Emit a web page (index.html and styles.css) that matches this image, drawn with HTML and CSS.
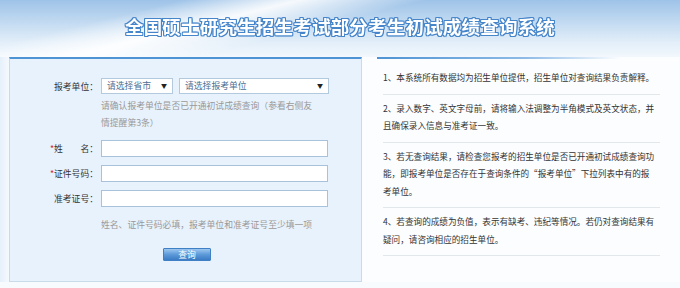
FILE: index.html
```html
<!DOCTYPE html>
<html lang="zh-CN">
<head>
    <meta charset="utf-8">
    <title>全国硕士研究生招生考试部分考生初试成绩查询系统</title>
    <link rel="stylesheet" href="styles.css">
</head>
<body>
    <div class="header">
        <h1 class="title">全国硕士研究生招生考试部分考生初试成绩查询系统</h1>
    </div>
    <div class="main">
        <div class="query-panel">
            <div class="form-row">
                <label class="form-label">报考单位：</label>
                <div class="form-field">
                    <span class="select-box province">请选择省市</span>
                    <span class="select-box school">请选择报考单位</span>
                </div>
            </div>
            <div class="hint">请确认报考单位是否已开通初试成绩查询（参看右侧友<br>情提醒第3条）</div>
            <div class="form-row input-row">
                <label class="form-label"><span class="required">*</span>姓　　名：</label>
                <div class="form-field"><input type="text" class="text-input"></div>
            </div>
            <div class="form-row input-row">
                <label class="form-label"><span class="required">*</span>证件号码：</label>
                <div class="form-field"><input type="text" class="text-input"></div>
            </div>
            <div class="form-row input-row">
                <label class="form-label">准考证号：</label>
                <div class="form-field"><input type="text" class="text-input"></div>
            </div>
            <div class="hint">姓名、证件号码必填，报考单位和准考证号至少填一项</div>
            <div class="button-row">
                <button class="query-button">查询</button>
            </div>
        </div>
        <div class="notice-panel">
            <ul class="notice-list">
                <li>1、本系统所有数据均为招生单位提供，招生单位对查询结果负责解释。</li>
                <li>2、录入数字、英文字母前，请将输入法调整为半角模式及英文状态，并<br>且确保录入信息与准考证一致。</li>
                <li>3、若无查询结果，请检查您报考的招生单位是否已开通初试成绩查询功<br>能，即报考单位是否存在于查询条件的“报考单位”下拉列表中有的报<br>考单位。</li>
                <li>4、若查询的成绩为负值，表示有缺考、违纪等情况。若仍对查询结果有<br>疑问，请咨询相应的招生单位。</li>
            </ul>
        </div>
    </div>
</body>
</html>
```

FILE: styles.css
```css
body {
    margin: 0;
    font-family: "Noto Sans CJK SC", "Liberation Sans", sans-serif;
    background-color: #f8fbfe;
    color: #333;
    height: 288px;
    overflow: hidden;
}
.header {
    height: 57px;
    background:
        linear-gradient(166deg, rgba(255,255,255,0) 20%, rgba(255,255,255,0.9) 33%, rgba(255,255,255,0) 47%),
        linear-gradient(to bottom, #9ec3e8 0, #c2daf1 22px, #e2eef9 42px, #f2f8fd 57px);
    display: flex;
    justify-content: center;
    padding-top: 14px;
    box-sizing: border-box;
}
.title {
    margin: 0;
    font-size: 18.5px;
    line-height: 24px;
    font-weight: 700;
    letter-spacing: 0.2px;
    color: #ffffff;
    text-shadow: 1px 0 #4585ca, -1px 0 #4585ca, 0 1px #4585ca, 0 -1px #4585ca,
        1px 1px #4585ca, -1px -1px #4585ca, 1px -1px #4585ca, -1px 1px #4585ca;
    -webkit-box-reflect: below -7px linear-gradient(transparent 55%, rgba(0,0,0,0.2));
}
.main {
    display: flex;
    gap: 15px;
    padding-left: 9px;
    background: linear-gradient(to right, #e6f0fa 0, #f5f9fd 9px, #fbfdff 380px);
}
.query-panel {
    width: 353px;
    height: 225px;
    box-sizing: border-box;
    background-color: #e8f2fc;
    border: 1px solid #c9dae9;
    border-top: 2px solid #4e93d3;
    padding: 19px 0 0 0;
    font-size: 8.8px;
}
.form-row {
    display: flex;
    align-items: center;
    height: 16px;
}
.form-label {
    width: 88px;
    text-align: right;
    padding-right: 3px;
    color: #333;
    white-space: nowrap;
}
.required {
    color: #d42a2a;
}
.form-field {
    display: flex;
    gap: 6px;
}
.select-box {
    position: relative;
    height: 16px;
    line-height: 14px;
    box-sizing: border-box;
    background-color: #fff;
    border: 1px solid #b3c9de;
    color: #4d6f95;
    padding-left: 5px;
}
.select-box::after {
    content: "▼";
    position: absolute;
    right: 5px;
    top: 0;
    font-size: 6px;
    color: #222;
}
.province {
    width: 72px;
}
.school {
    width: 150px;
}
.hint {
    margin: 3px 0 0 91px;
    line-height: 17px;
    color: #999;
    white-space: nowrap;
}
.input-row {
    height: 17px;
    margin-top: 8px;
}
.hint + .input-row {
    margin-top: 9px;
}
.input-row + .hint {
    margin-top: 9px;
}
.text-input {
    width: 227px;
    height: 17px;
    box-sizing: border-box;
    border: 1px solid #a8c2dc;
    background-color: #fff;
    margin: 0;
    padding: 0;
}
.button-row {
    margin-top: 15px;
    padding-left: 153px;
}
.query-button {
    width: 48px;
    height: 13px;
    padding: 0;
    border: 1px solid #3f7fc3;
    border-radius: 1px;
    background: linear-gradient(to bottom, #9cc6ef 0, #5d9ad9 50%, #3a7bc4 100%);
    color: #fff;
    font-family: "Noto Sans CJK SC", sans-serif;
    font-size: 8.8px;
    line-height: 11px;
}
.notice-panel {
    width: 296px;
    padding-top: 2px;
    background: linear-gradient(to right, #4e93d3 0, #8dbbe6 50%, rgba(255,255,255,0) 82%) no-repeat;
    background-size: 100% 2px;
}
.notice-list {
    list-style: none;
    margin: 0;
    padding: 5px 0 0 6px;
    width: 277px;
    font-size: 8.6px;
    line-height: 17.5px;
    color: #333;
    white-space: nowrap;
}
.notice-list li {
    padding: 5px 0 7px 0;
    border-bottom: 1px solid #e2e7ec;
}
```
